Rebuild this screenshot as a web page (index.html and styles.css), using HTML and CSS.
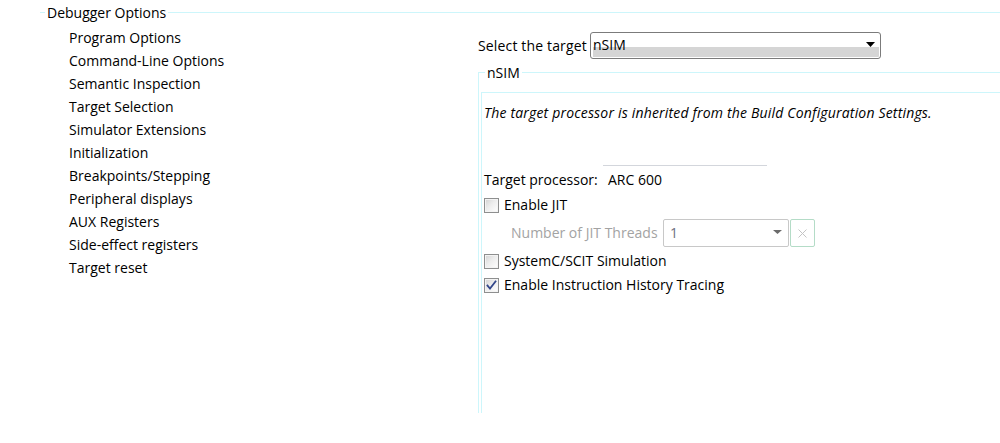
FILE: index.html
```html
<!DOCTYPE html>
<html>
<head>
<meta charset="utf-8">
<title>Debugger Options</title>
<link rel="stylesheet" href="styles.css">
</head>
<body>
<fieldset class="page-group">
  <legend class="legend">Debugger Options</legend>
  <div class="layout">
    <ul class="nav">
      <li>Program Options</li>
      <li>Command-Line Options</li>
      <li>Semantic Inspection</li>
      <li>Target Selection</li>
      <li>Simulator Extensions</li>
      <li>Initialization</li>
      <li>Breakpoints/Stepping</li>
      <li>Peripheral displays</li>
      <li>AUX Registers</li>
      <li>Side-effect registers</li>
      <li>Target reset</li>
    </ul>
    <div class="panel">
      <div class="target-row">
        <span class="target-label">Select the target</span>
        <div class="combo">
          <span class="combo-text">nSIM</span>
          <svg class="combo-arrow" width="9" height="5" viewBox="0 0 9 5"><path d="M0 0H9L4.5 5Z" fill="#000"/></svg>
        </div>
      </div>
      <fieldset class="group">
        <legend class="legend group-legend">nSIM</legend>
        <fieldset class="subgroup">
          <p class="note">The target processor is inherited from the Build Configuration Settings.</p>
          <div class="proc-row">
            <span class="proc-label">Target processor:</span>
            <span class="proc-value">ARC 600</span>
          </div>
          <div class="check-row row-jit">
            <span class="checkbox"></span>
            <span class="check-text">Enable JIT</span>
          </div>
          <div class="threads-row">
            <span class="threads-label">Number of JIT Threads</span>
            <div class="threads-combo">
              <span class="threads-value">1</span>
              <svg class="threads-arrow" width="9" height="4" viewBox="0 0 9 4"><path d="M0 0H9L4.5 4Z" fill="#6b6b6b"/></svg>
            </div>
            <div class="threads-btn">
              <svg width="9" height="9" viewBox="0 0 9 9"><path d="M0.5 0.5L8.5 8.5M8.5 0.5L0.5 8.5" stroke="#c4c4c4" stroke-width="1" fill="none"/></svg>
            </div>
          </div>
          <div class="check-row row-systemc">
            <span class="checkbox"></span>
            <span class="check-text">SystemC/SCIT Simulation</span>
          </div>
          <div class="check-row row-history">
            <span class="checkbox checked">
              <svg width="13" height="13" viewBox="0 0 13 13"><path d="M2.5 6.5L5 9.5L10.5 2.5" stroke="#33478a" stroke-width="1.8" fill="none" stroke-linecap="square"/></svg>
            </span>
            <span class="check-text">Enable Instruction History Tracing</span>
          </div>
        </fieldset>
      </fieldset>
    </div>
  </div>
</fieldset>
</body>
</html>
```

FILE: styles.css
```css
* {
  box-sizing: border-box;
}

body {
  margin: 0;
  background: #fff;
  color: #000;
  font-family: "Open Sans", "Noto Sans", sans-serif;
  font-size: 14px;
}

fieldset {
  margin: 0;
  padding: 0;
  border: 0;
  min-width: 0;
}

.legend {
  padding: 0 2px;
  line-height: 21px;
}

.page-group {
  margin: 2px 0 0 40px;
  padding: 0 0 0 5px;
  border-top: 1px solid #cdf6fb;
}

.layout {
  display: flex;
}

.nav {
  list-style: none;
  margin: 0;
  padding: 3px 0 0 24px;
  width: 433px;
  flex: none;
  line-height: 23px;
}

.panel {
  flex: 1;
  min-width: 0;
}

.target-row {
  display: flex;
  align-items: center;
  height: 27px;
  margin-top: 9px;
}

.target-label {
  width: 112px;
  flex: none;
  line-height: 20px;
  letter-spacing: 0.15px;
}

.combo {
  display: flex;
  width: 291px;
  height: 27px;
  border: 1px solid #7b7b7b;
  border-radius: 3px;
  padding: 0 1px 1px 2px;
  background: linear-gradient(#fff 14px, #d5d5d5 14px) content-box;
}

.combo-text {
  align-self: center;
  line-height: 20px;
}

.combo-arrow {
  align-self: flex-start;
  margin: 9px 4px 0 auto;
}

.group {
  margin-top: 3px;
  height: 351px;
  border-left: 1px solid #cdf6fb;
  border-top: 1px solid #cdf6fb;
}

.group-legend {
  margin-left: 6px;
}

.subgroup {
  margin: 9px 0 0 2px;
  height: 321px;
  padding: 10px 0 0 2px;
  border-left: 1px solid #cdf6fb;
  border-top: 1px solid #cdf6fb;
}

.note {
  margin: 0;
  font-style: italic;
  line-height: 20px;
  letter-spacing: 0.18px;
}

.proc-row {
  display: flex;
  align-items: baseline;
  margin-top: 42px;
}

.proc-label {
  width: 119px;
  flex: none;
  line-height: 20px;
}

.proc-value {
  width: 164px;
  border-top: 1px solid #d3d6dc;
  padding: 4px 0 0 5px;
  line-height: 20px;
}

.check-row {
  display: flex;
  align-items: center;
  height: 24px;
}

.row-jit {
  margin-top: 3px;
}

.row-systemc {
  margin-top: 2px;
}

.checkbox {
  width: 15px;
  height: 15px;
  flex: none;
  margin-right: 5px;
  border: 1px solid #8e8f8f;
  background: linear-gradient(135deg, #d2d2d2 0%, #ededed 45%, #fff 100%);
  box-shadow: inset 0 0 0 1px #f4f4f4;
  display: flex;
  align-items: center;
  justify-content: center;
}

.check-text {
  line-height: 20px;
}

.threads-row {
  display: flex;
  align-items: center;
  height: 28px;
  margin-top: 2px;
  padding-left: 27px;
}

.threads-label {
  width: 152px;
  flex: none;
  color: #a3a3a3;
  line-height: 20px;
}

.threads-combo {
  display: flex;
  align-items: center;
  width: 126px;
  height: 28px;
  padding: 0 6px 0 6px;
  border: 1px solid #c8c8c8;
  border-radius: 2px;
}

.threads-value {
  color: #6f6f7f;
  line-height: 20px;
}

.threads-arrow {
  margin: -2px 0 0 auto;
}

.threads-btn {
  display: flex;
  align-items: center;
  justify-content: center;
  width: 25px;
  height: 28px;
  margin-left: 1px;
  border: 1px solid #b4dcc7;
  border-radius: 2px;
}
```
